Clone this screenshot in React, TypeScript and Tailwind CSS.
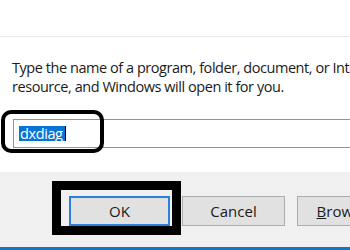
const App = () => {
  return (
    <div className="relative w-[350px] h-[250px] overflow-hidden bg-white font-['Open_Sans',sans-serif] text-[#1a1a1a]">
      {/* TITLE AREA */}
      <div className="h-[37px] border-b border-[#e8e8e8]" />
      {/* PROMPT */}
      <p className="pl-[12px] pt-[21px] text-[14.5px] leading-[19px] tracking-[-0.45px] whitespace-nowrap">
        Type the name of a program, folder, document, or Internet
        <br />
        resource, and Windows will open it for you.
      </p>
      {/* INPUT */}
      <div className="ml-[13px] mt-[23px] h-[29px] border border-r-0 border-[#6f9bd3] flex items-center pl-[5px]">
        <span className="bg-[#0a74d6] text-white text-[14.5px] tracking-[-0.4px] leading-[15px] h-[15px] pl-[1px] pr-[2px] pb-[1px] flex items-center">
          dxdiag
        </span>
        <span className="w-px h-[15px] bg-black" />
      </div>
      {/* FOOTER */}
      <div className="mt-[24px] h-[79px] bg-[#f0f0f0] border-b-[4px] border-[#1b75b9] flex items-start pt-[24px] pl-[69px] gap-[12px]">
        <button className="w-[101px] h-[30px] shrink-0 bg-[#e1e1e1] border-2 border-[#2d7fd8] text-[15px]">
          OK
        </button>
        <button className="w-[103px] h-[30px] shrink-0 bg-[#e1e1e1] border border-[#adadad] text-[15px]">
          Cancel
        </button>
        <button className="w-[103px] h-[30px] shrink-0 bg-[#e1e1e1] border border-[#adadad] text-[15px]">
          <span className="underline">B</span>rowse...
        </button>
      </div>
      {/* ANNOTATION FRAMES */}
      <div className="absolute left-[1px] top-[110px] w-[103px] h-[43px] border-[4px] border-black rounded-[10px]" />
      <div className="absolute left-[52px] top-[181px] w-[129px] h-[54px] border-[9px] border-black" />
    </div>
  );
};

export default App;
